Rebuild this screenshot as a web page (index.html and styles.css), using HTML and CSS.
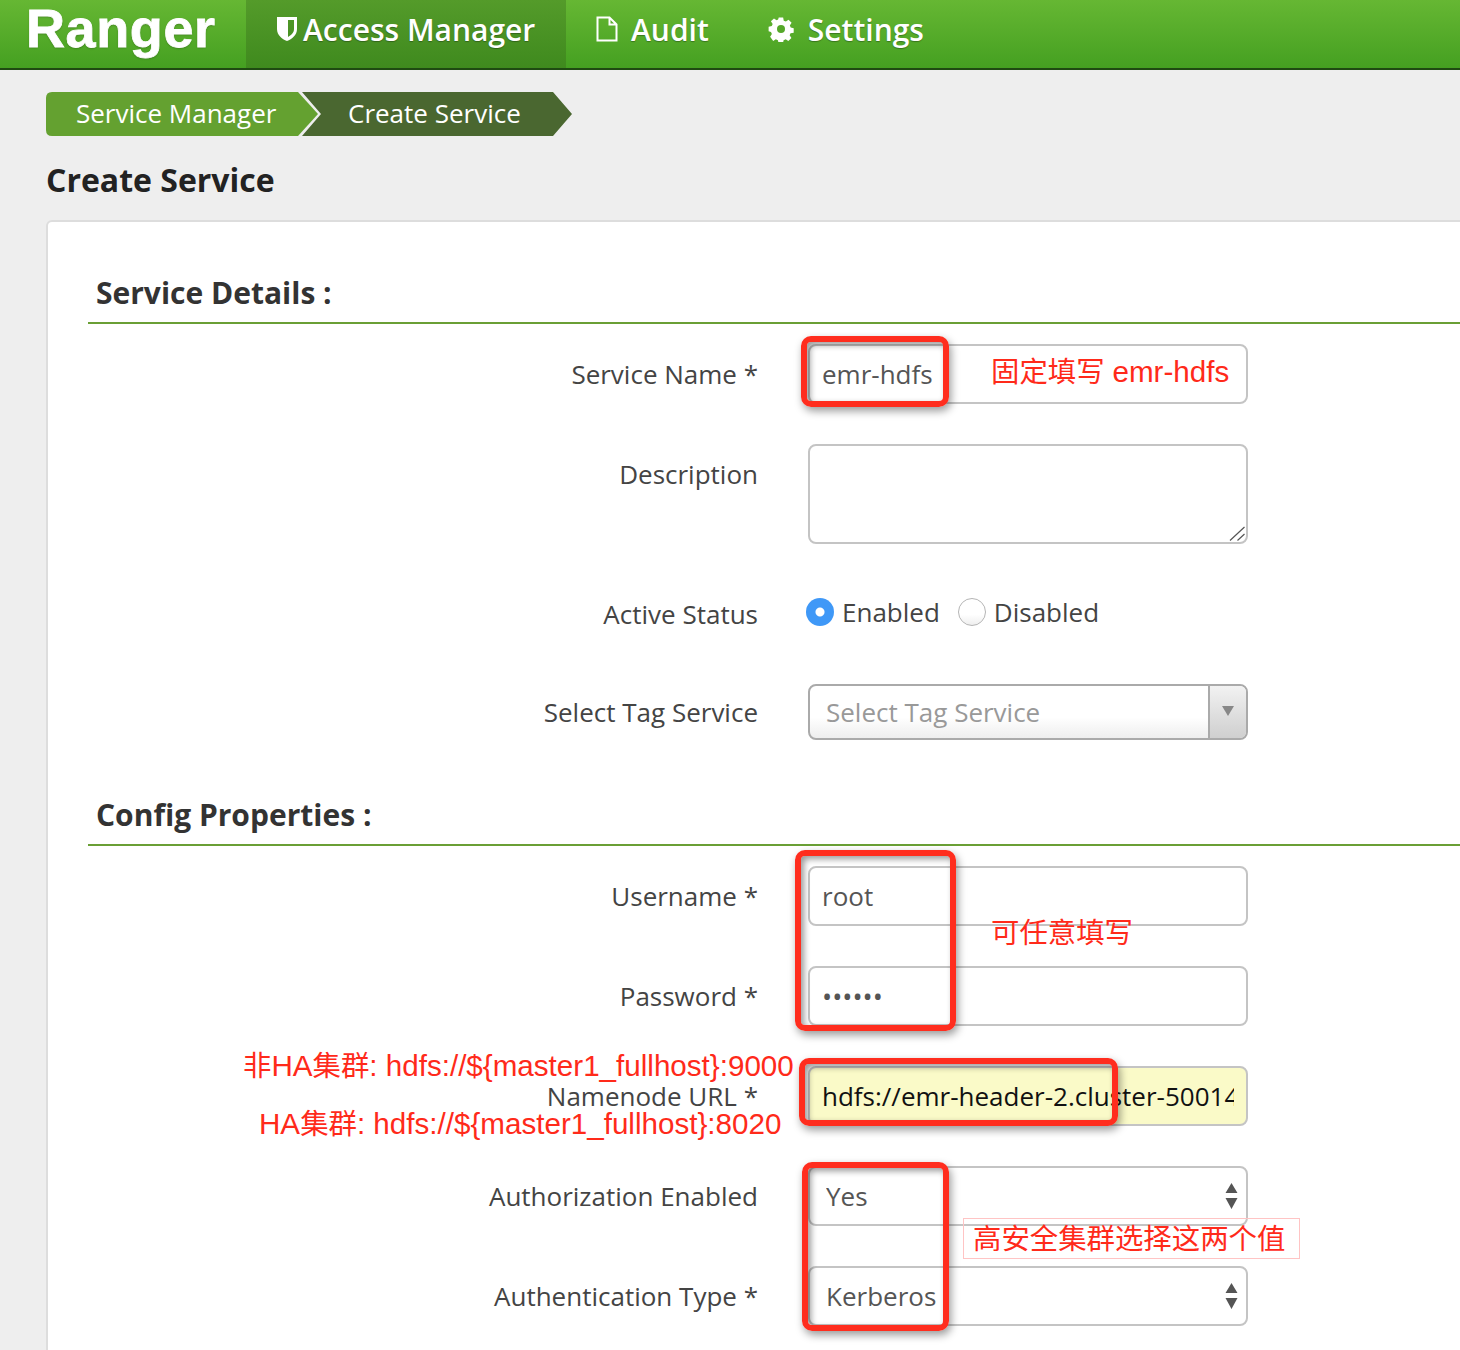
FILE: index.html
```html
<!DOCTYPE html>
<html lang="en">
<head>
<meta charset="utf-8">
<title>Ranger - Create Service</title>
<link rel="stylesheet" href="styles.css">
</head>
<body>
<div class="page">
  <header class="navbar">
    <a class="brand">Ranger</a>
    <nav class="nav">
      <a class="nav-item nav-item-active">
        <svg class="nav-icon shield" viewBox="0 0 22 26"><path d="M1 1h20v12c0 6-5 10-10 12C6 23 1 19 1 13zM12 4v17c3-2 6-4 6-8V4z" fill="#fff" fill-rule="evenodd"/></svg>
        Access Manager
      </a>
      <a class="nav-item">
        <svg class="nav-icon file" viewBox="0 0 22 26"><path d="M1.500 1.500h12l7 7v16h-19zM13.500 1.500v7h7" fill="none" stroke="#fff" stroke-width="2"/></svg>
        Audit
      </a>
      <a class="nav-item">
        <svg class="nav-icon gear" viewBox="0 0 26 26"><path d="M10.500 0h5l.7 3.600 2.400 1 3-2 3.500 3.500-2 3 1 2.400 3.400.7v5l-3.600.7-1 2.400 2 3-3.500 3.500-3-2-2.400 1-.7 3.600h-5l-.7-3.600-2.400-1-3 2L.7 21.800l2-3-1-2.400L-1 15.500v-5l3.600-.7 1-2.400-2-3L5.100 1.100l3 2 1.700-.7z" transform="translate(1.500 1.500) scale(.88)" fill="#fff"/><circle cx="13" cy="13" r="4" fill="#55a82a"/></svg>
        Settings
      </a>
    </nav>
  </header>

  <main class="content">
    <div class="crumbs">
      <a class="crumb crumb-first">Service Manager</a>
      <a class="crumb crumb-last">Create Service</a>
    </div>
    <h1 class="page-title">Create Service</h1>

    <section class="card">
      <h2 class="section-title">Service Details :</h2>
      <div class="form-row">
        <label class="form-label">Service Name *</label>
        <input class="field" type="text" value="emr-hdfs">
      </div>
      <div class="form-row">
        <label class="form-label form-label-top">Description</label>
        <div class="area-wrap">
          <textarea class="field field-area"></textarea>
          <svg class="area-grip" viewBox="0 0 16 15"><path d="M1 14.500L15.500 1M8.500 14.500l7-6.500" fill="none" stroke="#555" stroke-width="1.200"/></svg>
        </div>
      </div>
      <div class="form-row form-row-radio">
        <label class="form-label">Active Status</label>
        <div class="radios">
          <span class="radio radio-on"></span><span class="radio-text">Enabled</span>
          <span class="radio radio-off"></span><span class="radio-text">Disabled</span>
        </div>
      </div>
      <div class="form-row">
        <label class="form-label">Select Tag Service</label>
        <div class="combo">
          <span class="combo-text">Select Tag Service</span>
          <span class="combo-btn"><span class="combo-arrow"></span></span>
        </div>
      </div>

      <h2 class="section-title">Config Properties :</h2>
      <div class="form-row">
        <label class="form-label">Username *</label>
        <input class="field" type="text" value="root">
      </div>
      <div class="form-row">
        <label class="form-label">Password *</label>
        <input class="field field-password" type="password" value="secret">
      </div>
      <div class="form-row">
        <label class="form-label">Namenode URL *</label>
        <input class="field field-filled" type="text" value="hdfs://emr-header-2.cluster-500148414:9000">
      </div>
      <div class="form-row">
        <label class="form-label">Authorization Enabled</label>
        <div class="select-wrap">
          <select class="field field-select"><option>Yes</option><option>No</option></select>
          <svg class="select-arrows" viewBox="0 0 12 26"><path d="M6 0l6 10H0zM0 15h12L6 26z" fill="#555"/></svg>
        </div>
      </div>
      <div class="form-row">
        <label class="form-label">Authentication Type *</label>
        <div class="select-wrap">
          <select class="field field-select"><option>Kerberos</option><option>Simple</option></select>
          <svg class="select-arrows" viewBox="0 0 12 26"><path d="M6 0l6 10H0zM0 15h12L6 26z" fill="#555"/></svg>
        </div>
      </div>
    </section>
  </main>

  <div class="mark mark-name"></div>
  <div class="mark mark-user"></div>
  <div class="mark mark-url"></div>
  <div class="mark mark-auth"></div>
  <div class="note note-name">固定填写 <span class="latin">emr-hdfs</span></div>
  <div class="note note-user">可任意填写</div>
  <div class="note note-noha">非<span class="latin">HA</span>集群<span class="latin">: hdfs://${master1_fullhost}:9000</span></div>
  <div class="note note-ha"><span class="latin">HA</span>集群<span class="latin">: hdfs://${master1_fullhost}:8020</span></div>
  <div class="note note-auth">高安全集群选择这两个值</div>
</div>
</body>
</html>
```
FILE: styles.css
```css
* { box-sizing: border-box; }
html, body { margin: 0; padding: 0; }
body {
  background: #eeeeee;
  font-family: "Open Sans", "Noto Sans", sans-serif;
  color: #444;
}
.page {
  position: relative;
  width: 1460px;
  height: 1350px;
  overflow: hidden;
}

/* top bar */
.navbar {
  display: flex;
  height: 70px;
  background: linear-gradient(#66b733, #45a021);
  border-bottom: 2px solid #1f4a12;
}
.brand {
  width: 246px;
  padding-left: 26px;
  font: bold 54px/56px "Liberation Sans", Arial, sans-serif;
  letter-spacing: .6px;
  color: #fff;
  -webkit-text-stroke: .8px #fff;
  text-shadow: 0 1px 2px rgba(0, 0, 0, .3);
}
.nav { display: flex; }
.nav-item {
  display: flex;
  align-items: center;
  height: 68px;
  padding: 0 29px 10px 30px;
  font-size: 30px;
  font-weight: 600;
  color: #fff;
  white-space: nowrap;
  text-shadow: 0 1px 1px rgba(0, 0, 0, .3);
}
.nav-item-active {
  width: 320px;
  padding-right: 0;
  background: linear-gradient(#549b2a, #3f8a1e);
}
.nav-icon { flex: none; }
.shield { width: 22px; height: 26px; margin-right: 5px; }
.file { width: 22px; height: 26px; margin-right: 13px; }
.gear { width: 26px; height: 26px; margin-right: 14px; }

/* breadcrumb */
.content { padding: 22px 0 0 46px; }
.crumbs { display: flex; height: 44px; }
.crumb {
  display: flex;
  align-items: center;
  height: 44px;
  padding-bottom: 2px;
  font-size: 26px;
  color: #fff;
}
.crumb-first {
  width: 272px;
  padding-left: 30px;
  background: #64a130;
  clip-path: path("M6 0H252L272 22L252 44H6Q0 44 0 38V6Q0 0 6 0Z");
}
.crumb-last {
  width: 270px;
  margin-left: -16px;
  padding-left: 46px;
  background: #4a6730;
  clip-path: polygon(0 0, 251px 0, 270px 22px, 251px 44px, 0 44px, 19px 22px);
}
.page-title {
  margin: 22px 0 18px 0;
  font-size: 32px;
  line-height: 44px;
  font-weight: 700;
  color: #222;
}

/* card */
.card {
  width: 1500px;
  height: 1200px;
  padding: 36px 0 0 40px;
  background: #fff;
  border: 2px solid #dddddd;
  border-radius: 6px 0 0 0;
}
.section-title {
  height: 66px;
  margin: 0 0 20px;
  padding: 10px 0 0 8px;
  font-size: 30px;
  line-height: 50px;
  font-weight: 700;
  color: #333;
  border-bottom: 2px solid #6a9f35;
}

/* form */
.form-row {
  display: grid;
  grid-template-columns: 670px 440px;
  column-gap: 50px;
  align-items: center;
  margin-bottom: 40px;
}
.form-row-radio { height: 60px; }
.form-label {
  text-align: right;
  font-size: 26px;
  line-height: 30px;
  color: #444;
}
.form-label-top { align-self: start; padding-top: 15px; }
.field {
  display: block;
  width: 440px;
  height: 60px;
  margin: 0;
  padding: 0 12px;
  font-family: "Open Sans", "Noto Sans", sans-serif;
  font-size: 26px;
  color: #555;
  background: #fff;
  border: 2px solid #c4c4c4;
  border-radius: 8px;
  outline: none;
}
.area-wrap { position: relative; width: 440px; }
.field-area { height: 100px; resize: none; }
.area-grip {
  position: absolute;
  right: 3px;
  bottom: 3px;
  width: 16px;
  height: 15px;
}
.field-password { font-size: 27px; }
.field-filled { background: #fafac8; color: #111; }
.select-wrap { position: relative; width: 440px; }
.field-select {
  appearance: none;
  -webkit-appearance: none;
  padding: 0 16px;
}
.select-arrows {
  position: absolute;
  top: 17px;
  right: 10px;
  width: 13px;
  height: 26px;
}

/* radios */
.radios { display: flex; align-items: center; margin-left: -2px; padding-bottom: 4px; }
.radio {
  flex: none;
  width: 28px;
  height: 28px;
  border-radius: 50%;
}
.radio-on {
  background: radial-gradient(circle, #fff 0 4px, #3f98f7 5px);
}
.radio-off {
  background: linear-gradient(#fff 60%, #eee);
  border: 1.500px solid #b5b5b5;
}
.radio-text {
  margin: 0 18px 0 8px;
  font-size: 26px;
  line-height: 32px;
  color: #444;
}

/* combo */
.combo {
  display: flex;
  width: 440px;
  height: 56px;
  background: linear-gradient(#fff 60%, #eee);
  border: 2px solid #aaa;
  border-radius: 8px;
  overflow: hidden;
}
.combo-text {
  flex: 1;
  padding-left: 16px;
  font-size: 26px;
  line-height: 52px;
  color: #999;
}
.combo-btn {
  display: flex;
  justify-content: center;
  padding-top: 20px;
  width: 38px;
  background: linear-gradient(#f2f2f2, #cfcfcf);
  border-left: 2px solid #aaa;
}
.combo-arrow {
  width: 0;
  height: 0;
  border-left: 6px solid transparent;
  border-right: 6px solid transparent;
  border-top: 10px solid #888;
}

/* red annotations, drawn over the screenshot */
.mark {
  position: absolute;
  border: 6px solid #ff2d1e;
  border-radius: 10px;
  box-shadow: 2px 4px 8px rgba(0, 0, 0, .4), inset 3px 3px 6px rgba(0, 0, 0, .4);
}
.mark-name { left: 801px; top: 336px; width: 148px; height: 71px; }
.mark-user { left: 795px; top: 850px; width: 161px; height: 181px; }
.mark-url { left: 799px; top: 1058px; width: 319px; height: 68px; }
.mark-auth { left: 802px; top: 1162px; width: 147px; height: 169px; }
.note {
  position: absolute;
  font-family: "Liberation Sans", "Noto Sans CJK SC", sans-serif;
  font-size: 28.400px;
  line-height: 30px;
  color: #ff2a1a;
  white-space: nowrap;
}
.latin { font-size: 29.600px; }
.note-name { left: 991px; top: 357px; }
.note-user { left: 991px; top: 918px; }
.note-noha { left: 243px; top: 1051px; }
.note-ha { left: 259px; top: 1109px; }
.note-auth {
  left: 963px;
  top: 1218px;
  width: 337px;
  height: 41px;
  padding-left: 9px;
  line-height: 40px;
  border: 1px solid #ffc4c4;
}
```
